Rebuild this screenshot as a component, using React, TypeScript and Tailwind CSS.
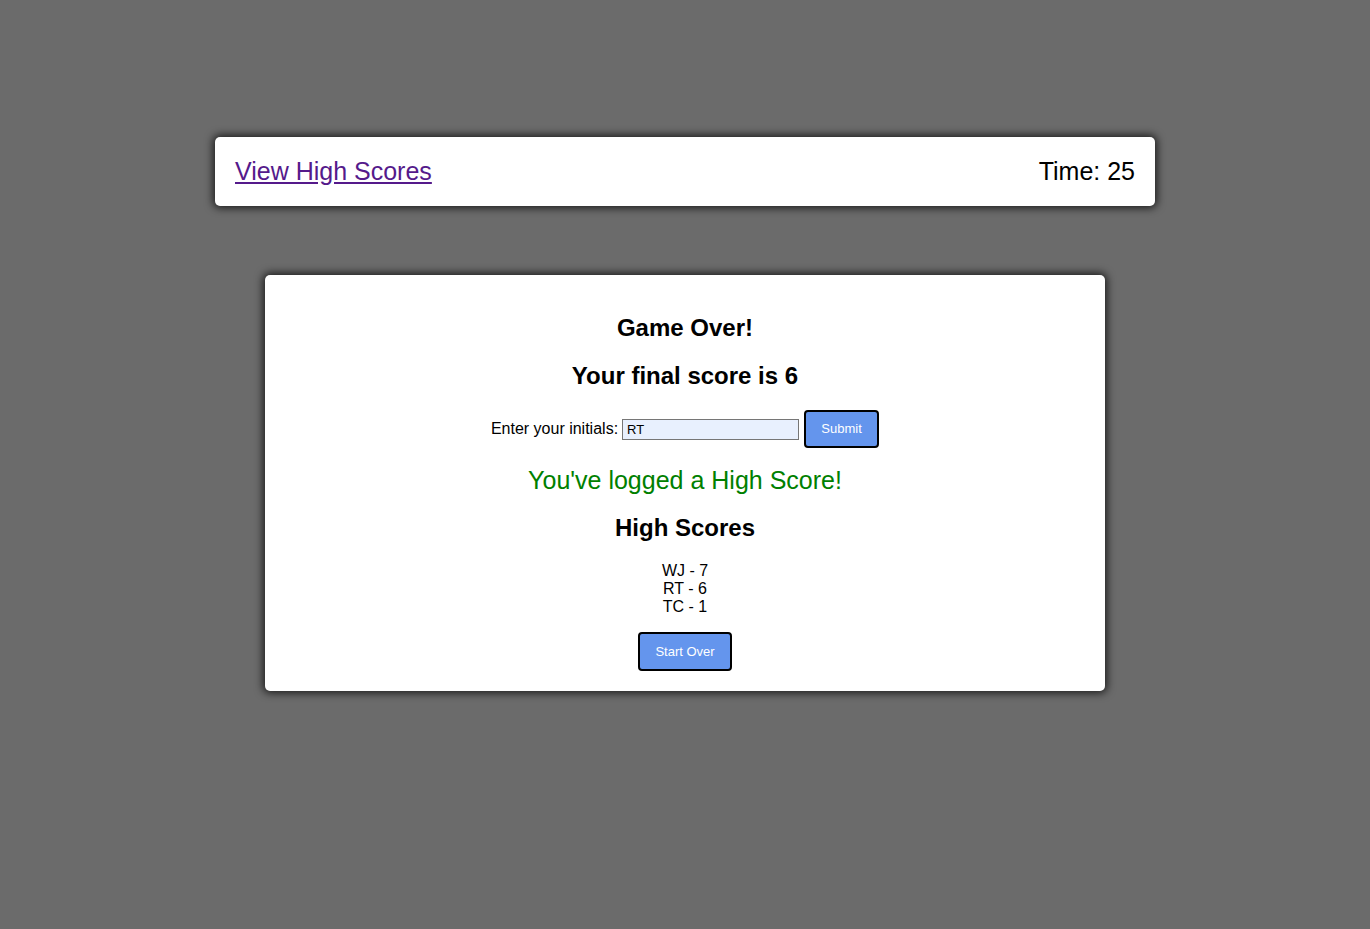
const scores = [
  { initials: "WJ", score: 7 },
  { initials: "RT", score: 6 },
  { initials: "TC", score: 1 },
];

const App = () => {
  return (
    <div className="min-h-[929px] bg-[#6b6b6b] pt-[137px] font-['Liberation_Sans',Arial,sans-serif] text-black">
      <header className="mx-auto flex h-[69px] w-[940px] items-center justify-between rounded-[5px] bg-white px-5 shadow-[0_0_8px_2px_rgba(0,0,0,0.75)]">
        <a href="#" className="text-[25px] text-[#551a8b] underline">
          View High Scores
        </a>
        <span className="text-[25px]">Time: 25</span>
      </header>

      <main className="mx-auto mt-[69px] flex w-[840px] flex-col items-center rounded-[5px] bg-white pt-[40px] pb-[20px] shadow-[0_0_8px_2px_rgba(0,0,0,0.75)]">
        <h2 className="text-[24px] font-bold leading-[26px]">Game Over!</h2>
        <h2 className="mt-[22px] text-[24px] font-bold leading-[26px]">Your final score is 6</h2>

        <form className="mt-[21px] flex items-center" onSubmit={(e) => e.preventDefault()}>
          <label className="text-[16px]">Enter your initials:</label>
          <input
            defaultValue="RT"
            className="ml-[4px] h-[21px] w-[177px] border border-[#767676] bg-[#e8f0fe] px-[4px] text-[13px] outline-none"
          />
          <button
            type="submit"
            className="ml-[5px] h-[38px] w-[75px] rounded-[4px] border-2 border-black bg-[#6495ed] text-[13px] text-white"
          >
            Submit
          </button>
        </form>

        <p className="mt-[18px] text-[25px] leading-[28px] text-[#008000]">You've logged a High Score!</p>

        <h2 className="mt-[21px] text-[24px] font-bold leading-[26px]">High Scores</h2>
        <ul className="mt-[21px] text-center text-[16px] leading-[18px]">
          {scores.map((s) => (
            <li key={s.initials}>
              {s.initials} - {s.score}
            </li>
          ))}
        </ul>

        <button className="mt-[16px] h-[39px] w-[94px] rounded-[4px] border-2 border-black bg-[#6495ed] text-[13px] text-white">
          Start Over
        </button>
      </main>
    </div>
  );
};

export default App;
